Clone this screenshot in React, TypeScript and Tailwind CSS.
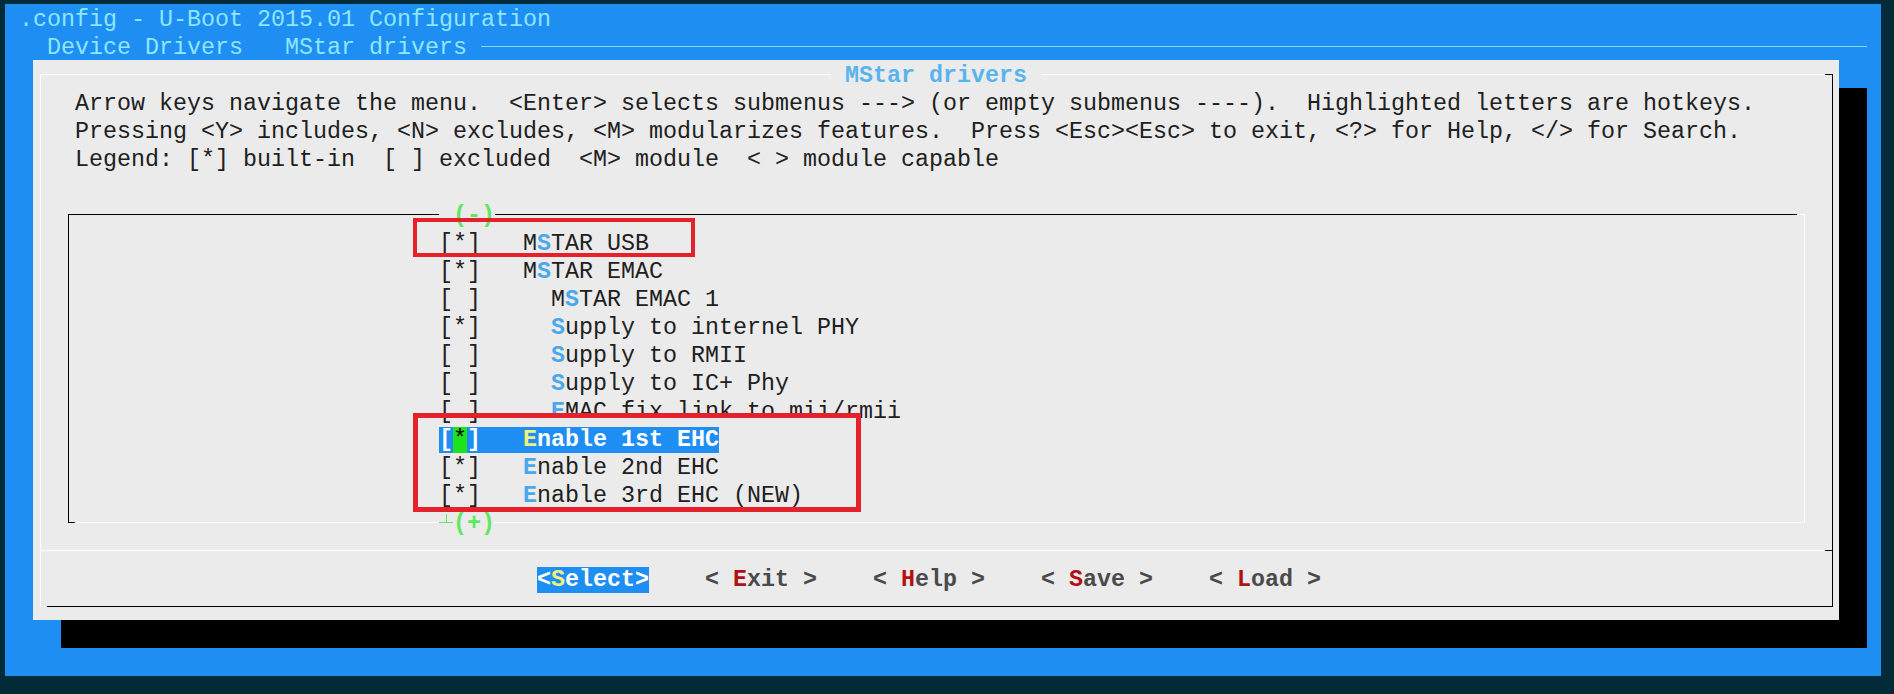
type GlyphProps = { u?: boolean; d?: boolean; l?: boolean; r?: boolean; color: string };

// one terminal cell holding a box-drawing character
function Glyph({ u, d, l, r, color }: GlyphProps) {
  return (
    <svg width="14" height="28" className="shrink-0" shapeRendering="crispEdges">
      {u && <rect x="7" y="0" width="1" height="15" fill={color} />}
      {d && <rect x="7" y="14" width="1" height="14" fill={color} />}
      {l && <rect x="0" y="14" width="8" height="1" fill={color} />}
      {r && <rect x="7" y="14" width="7" height="1" fill={color} />}
    </svg>
  );
}

function HLine({ color, fixed }: { color: string; fixed?: string }) {
  return (
    <span className={`${fixed ?? "flex-1"} h-[28px] shrink-0 pt-[14px]`}>
      <span className={`block h-px ${color}`} />
    </span>
  );
}

function Cell() {
  return <span className="w-[14px] shrink-0" />;
}

function DRow({ children }: { children?: React.ReactNode }) {
  return (
    <div className="flex h-[28px]">
      <Glyph u d color="#ffffff" />
      <div className="flex flex-1 whitespace-pre">{children}</div>
      <Glyph u d color="#000000" />
    </div>
  );
}

type Item = { on: boolean; indent: boolean; pre: string; hot: string; post: string; sel?: boolean };

const items: Item[] = [
  { on: true, indent: false, pre: "M", hot: "S", post: "TAR USB" },
  { on: true, indent: false, pre: "M", hot: "S", post: "TAR EMAC" },
  { on: false, indent: true, pre: "M", hot: "S", post: "TAR EMAC 1" },
  { on: true, indent: true, pre: "", hot: "S", post: "upply to internel PHY" },
  { on: false, indent: true, pre: "", hot: "S", post: "upply to RMII" },
  { on: false, indent: true, pre: "", hot: "S", post: "upply to IC+ Phy" },
  { on: false, indent: true, pre: "", hot: "E", post: "MAC fix link to mii/rmii" },
  { on: true, indent: false, pre: "", hot: "E", post: "nable 1st EHC", sel: true },
  { on: true, indent: false, pre: "", hot: "E", post: "nable 2nd EHC" },
  { on: true, indent: false, pre: "", hot: "E", post: "nable 3rd EHC (NEW)" },
];

function MenuItem({ item }: { item: Item }) {
  const gap = item.indent ? "     " : "   ";
  if (item.sel) {
    return (
      <span className="bg-[#1e8ef2] font-bold text-white">
        [<span className="bg-[#1fe21f] font-normal text-black">*</span>]{gap}
        <span className="text-[#eef27c]">{item.hot}</span>
        {item.post}
      </span>
    );
  }
  return (
    <span>
      {item.on ? "[*]" : "[ ]"}
      {gap}
      {item.pre}
      <span className="font-bold text-[#4aa8ec]">{item.hot}</span>
      {item.post}
    </span>
  );
}

function Button({ hot, rest, active }: { hot: string; rest: string; active?: boolean }) {
  if (active) {
    return (
      <span className="bg-[#1e8ef2] font-bold text-white">
        {"<"}
        <span className="text-[#eef27c]">{hot}</span>
        {rest}
        {">"}
      </span>
    );
  }
  return (
    <span className="font-bold text-[#4a4a4a]">
      {"< "}
      <span className="text-[#b01212]">{hot}</span>
      {rest}
      {" >"}
    </span>
  );
}

export default function App() {
  return (
    <div className="relative h-[694px] w-[1894px] overflow-hidden bg-[#032a39] pl-[5px] pt-[4px] font-['Liberation_Mono','Courier_New',monospace] text-[23.333px] leading-[33px] text-[#202020]">
      <div className="h-[672px] w-[1876px] bg-[#1e8ef2]">
        {/* back title */}
        <div className="h-[28px] whitespace-pre pl-[14px] text-[#8ee6ff]">.config - U-Boot 2015.01 Configuration</div>
        <div className="flex h-[28px] whitespace-pre pl-[42px] text-[#8ee6ff]">
          <span>Device Drivers   MStar drivers </span>
          <HLine color="bg-[#7fdcff]" />
          <Cell />
        </div>

        {/* dialog */}
        <div className="pl-[28px]">
          <div className="w-[1806px] bg-[#ebebeb] shadow-[28px_28px_0_0_#000]">
            <div className="flex h-[28px]">
              <Glyph d r color="#ffffff" />
              <HLine color="bg-white" />
              <span className="whitespace-pre font-bold text-[#58b4ee]"> MStar drivers </span>
              <HLine color="bg-white" />
              <Glyph l d color="#000000" />
            </div>
            <DRow>
              {"  Arrow keys navigate the menu.  <Enter> selects submenus ---> (or empty submenus ----).  Highlighted letters are hotkeys."}
            </DRow>
            <DRow>
              {"  Pressing <Y> includes, <N> excludes, <M> modularizes features.  Press <Esc><Esc> to exit, <?> for Help, </> for Search."}
            </DRow>
            <DRow>{"  Legend: [*] built-in  [ ] excluded  <M> module  < > module capable"}</DRow>
            <DRow />

            {/* menu box top */}
            <DRow>
              <Cell />
              <Glyph d r color="#000000" />
              <HLine color="bg-black" fixed="w-[364px]" />
              <span className="font-bold text-[#5ee85e]"> (-)</span>
              <HLine color="bg-black" />
              <Glyph l d color="#ffffff" />
              <Cell />
            </DRow>
            {items.map((item, i) => (
              <DRow key={i}>
                <Cell />
                <Glyph u d color="#000000" />
                <div className="flex-1">
                  {"                          "}
                  <MenuItem item={item} />
                </div>
                <Glyph u d color="#ffffff" />
                <Cell />
              </DRow>
            ))}
            {/* menu box bottom */}
            <DRow>
              <Cell />
              <Glyph u r color="#000000" />
              <HLine color="bg-white" fixed="w-[364px]" />
              <svg width="14" height="28" className="shrink-0" shapeRendering="crispEdges">
                <rect x="0" y="14" width="14" height="1" fill="#5ee85e" />
                <rect x="7" y="6" width="1" height="9" fill="#5ee85e" />
              </svg>
              <span className="font-bold text-[#5ee85e]">(+)</span>
              <HLine color="bg-white" />
              <Glyph u l color="#ffffff" />
              <Cell />
            </DRow>

            {/* separator */}
            <div className="flex h-[28px]">
              <Glyph u d r color="#ffffff" />
              <HLine color="bg-white" />
              <Glyph u d l color="#000000" />
            </div>
            <DRow>
              <span>
                {"                                   "}
                <Button hot="S" rest="elect" active />
                {"    "}
                <Button hot="E" rest="xit" />
                {"    "}
                <Button hot="H" rest="elp" />
                {"    "}
                <Button hot="S" rest="ave" />
                {"    "}
                <Button hot="L" rest="oad" />
              </span>
            </DRow>
            <div className="flex h-[28px]">
              <Glyph u r color="#ffffff" />
              <HLine color="bg-black" />
              <Glyph u l color="#000000" />
            </div>
          </div>
        </div>
      </div>

      {/* red annotation frames */}
      <div className="absolute left-[413px] top-[218px] h-[39px] w-[282px] border-4 border-[#e5212b]" />
      <div className="absolute left-[413px] top-[413px] h-[99px] w-[448px] border-[5px] border-[#e5212b]" />
    </div>
  );
}
